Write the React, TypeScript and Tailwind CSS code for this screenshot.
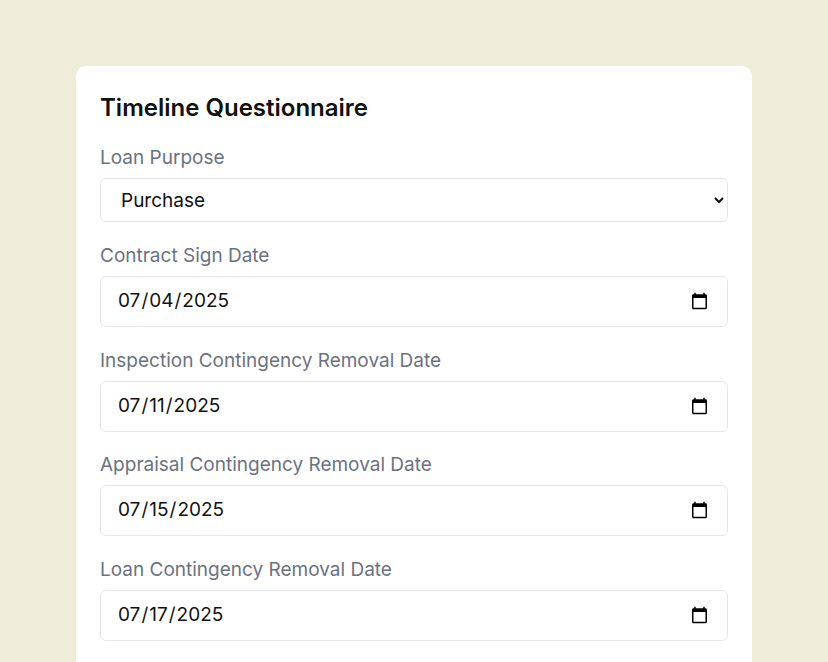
const fields = [
  { label: 'Contract Sign Date', value: '2025-07-04' },
  { label: 'Inspection Contingency Removal Date', value: '2025-07-11' },
  { label: 'Appraisal Contingency Removal Date', value: '2025-07-15' },
  { label: 'Loan Contingency Removal Date', value: '2025-07-17' },
];

export default function App() {
  return (
    <div className="min-h-screen bg-[#efecd9] pt-[66px] font-['Inter',sans-serif]">
      <div className="mx-auto w-[676px] rounded-[10px] bg-white p-6">
        <h2 className="mb-[18px] text-[24px] font-semibold leading-9 text-[#111]">
          Timeline Questionnaire
        </h2>

        <div className="mb-[20px]">
          <label className="mb-[6px] block text-[19px] leading-[28px] text-[#6b7280]">
            Loan Purpose
          </label>
          <select
            defaultValue="Purchase"
            className="h-[44px] w-full rounded-md border border-[#e5e7eb] bg-white px-4 text-[19px] text-[#111]"
          >
            <option>Purchase</option>
            <option>Refinance</option>
          </select>
        </div>

        {fields.map((f) => (
          <div key={f.label} className="mb-[19.5px]">
            <label className="mb-[6px] block text-[19px] leading-[28px] text-[#6b7280]">
              {f.label}
            </label>
            <input
              type="date"
              defaultValue={f.value}
              className="h-[51px] w-full rounded-md border border-[#e5e7eb] bg-white px-4 text-[19px] text-[#111]"
            />
          </div>
        ))}
      </div>
    </div>
  );
}
